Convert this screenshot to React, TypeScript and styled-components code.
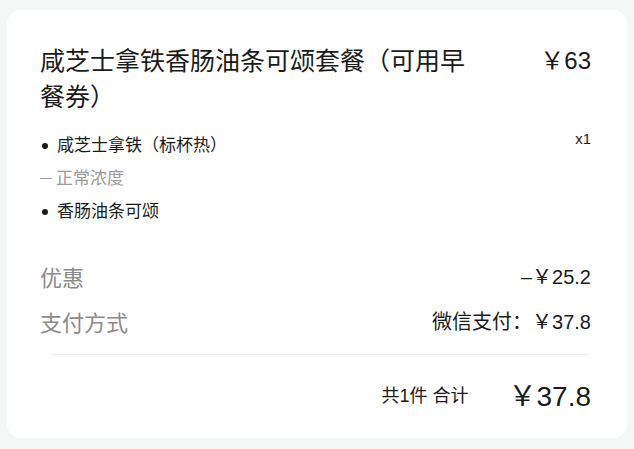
import { FC } from 'react'
import styled, { createGlobalStyle } from 'styled-components'

const GlobalStyle = createGlobalStyle`
    body {
        margin: 0;
        background: #f5f6f6;
        font-family: "Liberation Sans", "Noto Sans CJK SC", sans-serif;
        color: #1a1a1a;
    }
`

const Page = styled.div`
    padding: 10px 7px 11px 7px;
`

const Card = styled.div`
    background: #ffffff;
    border-radius: 14px;
    padding: 33px 36px 5px 33px;
    display: flex;
    flex-direction: column;
`

const TitleRow = styled.div`
    display: flex;
    justify-content: space-between;
    align-items: flex-start;
`

const Title = styled.div`
    width: 440px;
    font-size: 25px;
    line-height: 36px;
`

const Price = styled.div`
    font-size: 24px;
    line-height: 36px;
`

const ItemsRow = styled.div`
    display: flex;
    justify-content: space-between;
    align-items: flex-start;
    margin-top: 14px;
`

const ItemList = styled.div`
    display: flex;
    flex-direction: column;
`

interface iItem {
    muted?: boolean;
}

const Item = styled.div<iItem>`
    display: flex;
    align-items: center;
    font-size: 17px;
    line-height: 33px;
    color: ${props => props.muted ? '#9a9a9a' : '#1a1a1a'};
`

const Bullet = styled.span`
    width: 6px;
    height: 6px;
    border-radius: 50%;
    background: #1a1a1a;
    margin: 1px 9px 0 2px;
`

const Dash = styled.span`
    width: 12px;
    height: 1.5px;
    background: #9a9a9a;
    margin: 0 4px 0 0;
`

const Qty = styled.div`
    font-size: 15px;
    line-height: 20px;
`

const InfoList = styled.div`
    display: flex;
    flex-direction: column;
    margin-top: 25px;
`

const InfoRow = styled.div`
    display: flex;
    justify-content: space-between;
    align-items: center;
    height: 45px;
`

const Label = styled.span`
    font-size: 22px;
    color: #8a8a8a;
`

const Value = styled.span`
    font-size: 20px;
    color: #1a1a1a;
`

const Divider = styled.div`
    height: 1px;
    background: #ececec;
    margin: 11px 3px 0 12px;
`

const TotalRow = styled.div`
    display: flex;
    justify-content: flex-end;
    align-items: center;
    height: 78px;
`

const Count = styled.span`
    font-size: 18px;
    margin-right: 40px;
`

const Total = styled.span`
    font-size: 28px;
`

const App: FC = () => {
    return (
        <Page>
            <GlobalStyle />
            <Card>
                <TitleRow>
                    <Title>咸芝士拿铁香肠油条可颂套餐（可用早餐券）</Title>
                    <Price>￥63</Price>
                </TitleRow>
                <ItemsRow>
                    <ItemList>
                        <Item><Bullet />咸芝士拿铁（标杯热）</Item>
                        <Item muted><Dash />正常浓度</Item>
                        <Item><Bullet />香肠油条可颂</Item>
                    </ItemList>
                    <Qty>x1</Qty>
                </ItemsRow>
                <InfoList>
                    <InfoRow>
                        <Label>优惠</Label>
                        <Value>–￥25.2</Value>
                    </InfoRow>
                    <InfoRow>
                        <Label>支付方式</Label>
                        <Value>微信支付：￥37.8</Value>
                    </InfoRow>
                </InfoList>
                <Divider />
                <TotalRow>
                    <Count>共1件 合计</Count>
                    <Total>￥37.8</Total>
                </TotalRow>
            </Card>
        </Page>
    )
}

export default App
